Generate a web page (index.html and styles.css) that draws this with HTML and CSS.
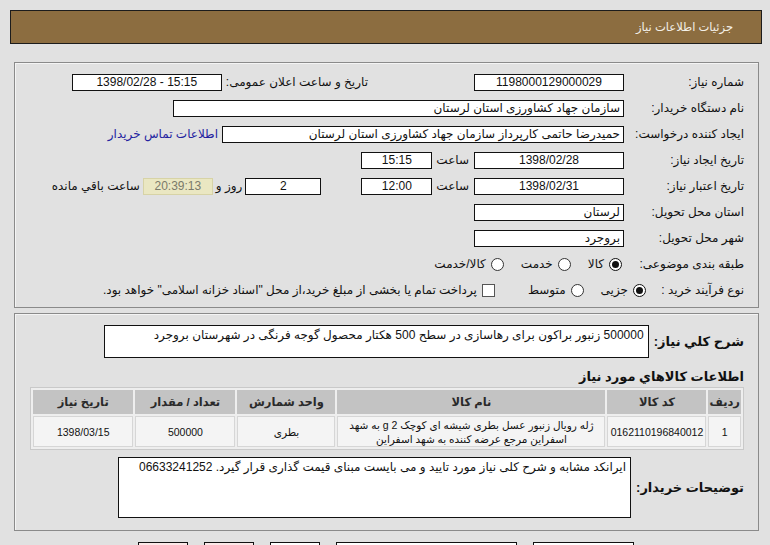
FILE: index.html
```html
<!DOCTYPE html>
<html lang="fa" dir="rtl">

<head>
  <meta charset="UTF-8">
  <meta name="viewport" content="width=device-width, initial-scale=1.0">
  <title>جزئیات اطلاعات نیاز</title>
  <link rel="stylesheet" href="styles.css">
</head>

<body>
  <div class="page">
    <div class="titlebar">جزئیات اطلاعات نیاز</div>

    <!-- مشخصات نیاز -->
    <div class="panel info">
      <div class="row">
        <span class="label">شماره نیاز:</span>
        <span class="box w148 center">1198000129000029</span>
        <span class="label-2">تاریخ و ساعت اعلان عمومی:</span>
        <span class="box w148 center ltr">1398/02/28 - 15:15</span>
      </div>
      <div class="row">
        <span class="label">نام دستگاه خریدار:</span>
        <span class="box w449">سازمان جهاد کشاورزی استان لرستان</span>
      </div>
      <div class="row">
        <span class="label">ایجاد کننده درخواست:</span>
        <span class="box w400">حمیدرضا حاتمی کارپرداز سازمان جهاد کشاورزی استان لرستان</span>
        <a class="contact" href="#">اطلاعات تماس خریدار</a>
      </div>
      <div class="row">
        <span class="label">تاریخ ایجاد نیاز:</span>
        <span class="box w148 center">1398/02/28</span>
        <span class="hour">ساعت</span>
        <span class="box w69 center">15:15</span>
      </div>
      <div class="row">
        <span class="label">تاریخ اعتبار نیاز:</span>
        <span class="box w148 center">1398/02/31</span>
        <span class="hour">ساعت</span>
        <span class="box w69 center">12:00</span>
        <span class="box w74 center days">2</span>
        <span class="unit">روز و</span>
        <span class="box w68 center remain">20:39:13</span>
        <span class="unit">ساعت باقي مانده</span>
      </div>
      <div class="row">
        <span class="label">استان محل تحویل:</span>
        <span class="box w148">لرستان</span>
      </div>
      <div class="row">
        <span class="label">شهر محل تحویل:</span>
        <span class="box w148">بروجرد</span>
      </div>
      <div class="row">
        <span class="label category">طبقه بندی موضوعی:</span>
        <span class="radio on"></span><span class="opt">کالا</span>
        <span class="radio"></span><span class="opt">خدمت</span>
        <span class="radio"></span><span class="opt">کالا/خدمت</span>
      </div>
      <div class="row">
        <span class="label process">نوع فرآیند خرید :</span>
        <span class="radio on"></span><span class="opt">جزیی</span>
        <span class="radio"></span><span class="opt">متوسط</span>
        <span class="check"></span><span class="opt">پرداخت تمام یا بخشی از مبلغ خرید،از محل "اسناد خزانه اسلامی" خواهد بود.</span>
      </div>
    </div>

    <!-- شرح نیاز و کالاها -->
    <div class="panel desc">
      <div class="row-desc">
        <span class="label-bold">شرح کلي نیاز:</span>
        <div class="textbox summary">500000 زنبور براکون برای رهاسازی در سطح 500 هکتار محصول گوجه فرنگی در شهرستان بروجرد</div>
      </div>

      <div class="heading">اطلاعات کالاهاي مورد نیاز</div>
      <table class="goods">
        <tr>
          <th class="c-row">ردیف</th>
          <th class="c-code">کد کالا</th>
          <th class="c-name">نام کالا</th>
          <th class="c-unit">واحد شمارش</th>
          <th class="c-qty">تعداد / مقدار</th>
          <th class="c-date">تاریخ نیاز</th>
        </tr>
        <tr>
          <td>1</td>
          <td>0162110196840012</td>
          <td>ژله رویال زنبور عسل بطری شیشه ای کوچک 2 g به شهد اسفراین مرجع عرضه کننده به شهد اسفراین</td>
          <td>بطری</td>
          <td>500000</td>
          <td>1398/03/15</td>
        </tr>
      </table>

      <div class="row-desc notes">
        <span class="label-bold">توضیحات خریدار:</span>
        <div class="textbox comment">ایرانکد مشابه و شرح کلی نیاز مورد تایید و می بایست مبنای قیمت گذاری قرار گیرد. 06633241252</div>
      </div>
    </div>

    <div class="buttons">
      <span class="btn w100"></span>
      <span class="btn w180"></span>
      <span class="btn w50"></span>
      <span class="btn w50 pink"></span>
      <span class="btn w50 pink"></span>
    </div>
  </div>
</body>

</html>
```

FILE: styles.css
```css
body {
  margin: 0;
  background-color: #e1e1e1;
  font-family: "Liberation Sans", "DejaVu Sans", sans-serif;
  font-size: 12px;
  color: #111;
  overflow: hidden;
}

.page {
  padding: 10px 8px 0 10px;
}

.titlebar {
  height: 32px;
  line-height: 32px;
  padding-right: 28px;
  background-color: #8c6d40;
  border: 1px solid #1c1c1c;
  color: #f4f0e8;
  font-size: 11.5px;
}

.panel {
  margin: 18px 3px 0 4px;
  border: 1px solid #8a8a8a;
  box-shadow: inset 1px 1px 0 #f4f4f4;
}

/* ردیف های فرم */
.info {
  padding: 6px 14px 4px 0;
  height: 234px;
}

.row {
  display: flex;
  align-items: center;
  height: 26px;
  white-space: nowrap;
}

.label {
  width: 120px;
  flex: none;
}

.label.category {
  width: 122px;
}

.label.process {
  width: 98px;
}

.label-2 {
  margin-right: 106px;
  margin-left: 4px;
}

.box {
  height: 15px;
  line-height: 15px;
  padding: 0 3px;
  border: 1px solid #111;
  background-color: #fff;
  box-sizing: content-box;
  overflow: hidden;
  flex: none;
}

.center {
  text-align: center;
}

.ltr {
  direction: ltr;
}

.w148 { width: 142px; }
.w449 { width: 443px; }
.w400 { width: 394px; }
.w69 { width: 63px; }
.w74 { width: 68px; }
.w68 { width: 62px; }

.contact {
  margin-right: 4px;
  color: #2323a0;
  text-decoration: none;
}

.hour {
  margin: 0 5px 0 4px;
}

.days {
  margin-right: 40px;
}

.unit {
  margin: 0 3px;
}

.remain {
  background-color: #eae7c2;
  border-color: #d7d3a6;
  color: #7a7a6a;
}

.radio,
.check {
  width: 11px;
  height: 11px;
  border: 1px solid #333;
  background-color: #fff;
  flex: none;
}

.radio {
  border-radius: 50%;
  position: relative;
}

.radio.on {
  border-color: #111;
}

.radio.on::after {
  content: "";
  position: absolute;
  top: 2px;
  left: 2px;
  width: 7px;
  height: 7px;
  border-radius: 50%;
  background-color: #111;
}

.check {
  margin-right: 16px;
  border-color: #555;
}

.opt {
  margin: 0 5px 0 17px;
}

/* شرح نیاز */
.desc {
  margin-top: 5px;
  padding: 11px 14px 12px 15px;
}

.row-desc {
  display: flex;
  align-items: center;
  white-space: nowrap;
}

.label-bold {
  flex: none;
  margin-left: 5px;
  font-weight: bold;
  font-size: 13px;
}

.textbox {
  flex: 1;
  border: 1px solid #111;
  background-color: #fff;
  padding: 2px 4px;
  line-height: 15px;
  white-space: normal;
}

.summary {
  height: 27px;
  margin-left: 74px;
}

.heading {
  margin: 11px 0 3px;
  font-weight: bold;
  font-size: 13px;
}

.goods {
  width: 100%;
  border: 1px solid #c9c9c9;
  border-spacing: 2px;
  background-color: #eeeeee;
}

.goods th {
  height: 22px;
  background-color: #c3c3c3;
  color: #2a2a2a;
  font-weight: bold;
  font-size: 11.5px;
}

.goods td {
  height: 29px;
  padding: 0 2px;
  background-color: #f4f4f4;
  border: 1px solid #d6d6d6;
  text-align: center;
  line-height: 14px;
  font-size: 10.5px;
}

.c-row { width: 26px; }
.c-code { width: 97px; }
.c-name { width: 266px; }
.c-unit { width: 96px; }
.c-qty { width: 98px; }

.notes {
  margin-top: 7px;
}

.comment {
  height: 55px;
  margin-left: 88px;
}

.buttons {
  display: flex;
  justify-content: center;
  gap: 16px;
  margin-top: 11px;
}

.btn {
  height: 20px;
  border: 1px solid #111;
  background-color: #fff;
}

.btn.pink {
  background-color: #fce8e8;
}

.w100 { width: 99px; }
.w180 { width: 179px; }
.w50 { width: 48px; }
```
